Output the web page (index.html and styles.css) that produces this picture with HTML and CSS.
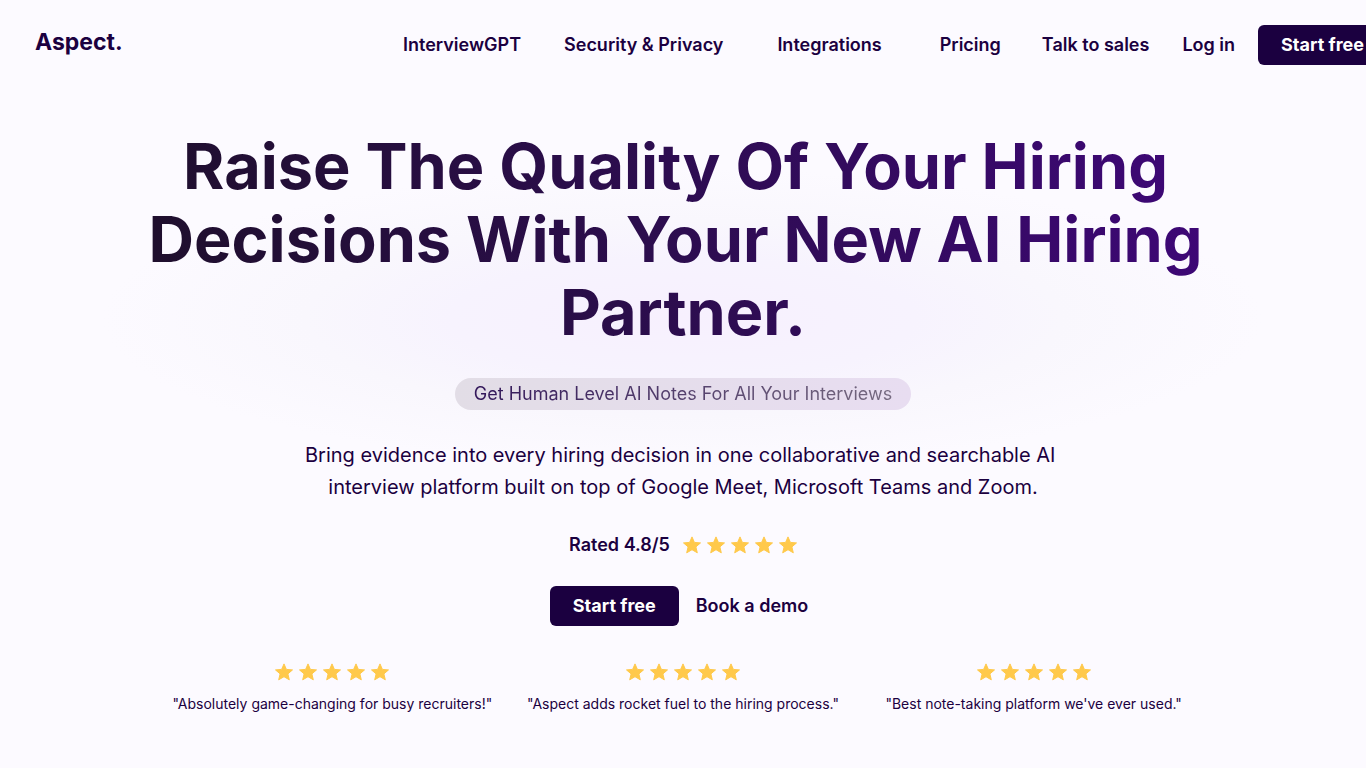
FILE: index.html
```
<!DOCTYPE html>
<html lang="en">
<head>
    <meta charset="UTF-8">
    <meta name="viewport" content="width=device-width, initial-scale=1.0">
    <title>Aspect</title>
    <link rel="stylesheet" href="styles.css">
</head>
<body>
<!-- Shared row of five stars -->
<svg class="sprite" aria-hidden="true">
    <defs>
        <path id="star" d="M9 .9l2.4 5.5 6.1.5-4.6 4 1.4 5.9L9 13.7l-5.3 3.1 1.4-5.9-4.6-4 6.1-.5z"/>
        <symbol id="stars" viewBox="0 0 114 18">
            <use href="#star"/>
            <use href="#star" x="24"/>
            <use href="#star" x="48"/>
            <use href="#star" x="72"/>
            <use href="#star" x="96"/>
        </symbol>
    </defs>
</svg>

<header class="navbar">
    <a href="#" class="logo">Aspect.</a>
    <nav class="nav-menu">
        <div class="nav-links">
            <a href="#" class="nav-link">InterviewGPT</a>
            <a href="#" class="nav-link">Security &amp; Privacy</a>
        </div>
        <div class="nav-links nav-links-wide">
            <a href="#" class="nav-link">Integrations</a>
            <a href="#" class="nav-link">Pricing</a>
        </div>
        <div class="nav-links nav-links-account">
            <a href="#" class="nav-link">Talk to sales</a>
            <a href="#" class="nav-link">Log in</a>
        </div>
        <button type="button" class="button">Start free</button>
    </nav>
</header>

<main class="hero">
    <h1>Raise The Quality Of Your Hiring&nbsp;<br>Decisions With Your New AI Hiring&nbsp;<br>Partner.</h1>
    <div class="pill"><span class="pill-text">Get Human Level AI Notes For All Your Interviews</span></div>
    <p class="intro">Bring evidence into every hiring decision in one collaborative and searchable AI&nbsp;<br>interview platform built on top of Google Meet, Microsoft Teams and Zoom.</p>

    <div class="rating">
        <span>Rated 4.8/5</span>
        <svg class="stars" role="img" aria-label="5 stars"><use href="#stars"/></svg>
    </div>

    <div class="actions">
        <button type="button" class="button">Start free</button>
        <a href="#" class="nav-link">Book a demo</a>
    </div>

    <div class="reviews">
        <div class="review">
            <svg class="stars" role="img" aria-label="5 stars"><use href="#stars"/></svg>
            <p>"Absolutely game-changing for busy recruiters!"</p>
        </div>
        <div class="review">
            <svg class="stars" role="img" aria-label="5 stars"><use href="#stars"/></svg>
            <p>"Aspect adds rocket fuel to the hiring process."</p>
        </div>
        <div class="review">
            <svg class="stars" role="img" aria-label="5 stars"><use href="#stars"/></svg>
            <p>"Best note-taking platform we've ever used."</p>
        </div>
    </div>
</main>
</body>
</html>
```
FILE: styles.css
```
* {
    box-sizing: border-box;
}

body {
    margin: 0;
    font-family: Inter, sans-serif;
    font-size: 18px;
    color: #1b0040;
    background-color: #fcfaff;
    background-image: radial-gradient(ellipse 580px 150px at 50% 318px, #f7f0fe 0%, #f7f3fe 40%, #f9f7fd 65%, #fcfaff 100%);
    background-repeat: no-repeat;
    overflow-x: hidden;
}

a {
    color: inherit;
    text-decoration: none;
}

.sprite {
    display: none;
}

.navbar {
    display: flex;
    justify-content: space-between;
    padding: 25px 0 0 35px;
}

.logo {
    font-size: 23px;
    font-weight: 700;
    line-height: 34px;
}

.nav-menu {
    display: flex;
    align-items: center;
    flex-shrink: 0;
    margin-right: -21px;
}

.nav-links {
    display: flex;
    gap: 43px;
    margin-right: 54px;
}

.nav-links-wide {
    gap: 58px;
    margin-right: 41px;
}

.nav-links-account {
    gap: 33px;
    margin-right: 23px;
}

.nav-link {
    padding-bottom: 2px;
    font-weight: 600;
    white-space: nowrap;
}

.button {
    height: 40px;
    padding: 0 23px 2px;
    border: none;
    border-radius: 6px;
    background-color: #1b0040;
    color: #fff;
    font-family: inherit;
    font-size: 18px;
    font-weight: 700;
    white-space: nowrap;
    cursor: pointer;
}

.hero {
    display: flex;
    flex-direction: column;
    align-items: center;
    padding-top: 65px;
    text-align: center;
}

h1 {
    margin: 0 0 29px;
    font-size: 63px;
    font-weight: 700;
    line-height: 73px;
    background-image: linear-gradient(75deg, #1e0f2b, #2d0d50 50%, #3f0779);
    background-clip: text;
    -webkit-background-clip: text;
    color: transparent;
}

.pill {
    padding: 0 19px;
    border-radius: 16px;
    background-image: linear-gradient(90deg, #e2dde6, #e8ddf1);
    line-height: 32px;
}

.pill-text {
    background-image: linear-gradient(90deg, #33175a, #75697f);
    background-clip: text;
    -webkit-background-clip: text;
    color: transparent;
}

.intro {
    margin: 29px 0 26px;
    font-size: 20px;
    line-height: 32px;
}

.rating {
    display: flex;
    align-items: center;
    gap: 13px;
    margin-bottom: 25px;
    font-weight: 600;
    line-height: 32px;
}

.stars {
    width: 114px;
    height: 18px;
    fill: #ffc94b;
    stroke: #ffc94b;
    stroke-linejoin: round;
}

.actions {
    display: flex;
    align-items: center;
    gap: 17px;
    margin-bottom: 37px;
    padding-right: 8px;
}

.reviews {
    display: grid;
    grid-template-columns: repeat(3, 1fr);
    width: 100%;
    max-width: 1052px;
}

.review p {
    margin: 9px 0 0;
    font-size: 14px;
    line-height: 20px;
}
```
